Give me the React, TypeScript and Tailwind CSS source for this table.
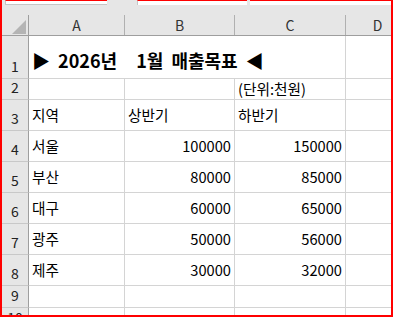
const font = "font-['Noto_Sans_CJK_KR','Noto_Sans',sans-serif]";

type Row = { n: number; h: string; a?: string; b?: string; c?: string; num?: boolean };

const rows: Row[] = [
  { n: 2, h: 'h-[21px]', c: '(단위:천원)' },
  { n: 3, h: 'h-[31px]', a: '지역', b: '상반기', c: '하반기' },
  { n: 4, h: 'h-[31px]', a: '서울', b: '100000', c: '150000', num: true },
  { n: 5, h: 'h-[31px]', a: '부산', b: '80000', c: '85000', num: true },
  { n: 6, h: 'h-[31px]', a: '대구', b: '60000', c: '65000', num: true },
  { n: 7, h: 'h-[31px]', a: '광주', b: '50000', c: '56000', num: true },
  { n: 8, h: 'h-[31px]', a: '제주', b: '30000', c: '32000', num: true },
  { n: 9, h: 'h-[22px]' },
  { n: 10, h: 'h-[22px]' },
];

function RowHead({ n }: { n: number }) {
  return (
    <div className="w-[27px] shrink-0 flex items-end justify-center pb-[5px] bg-[#e6e6e6] border-r border-r-[#9e9e9e] border-b border-b-[#c8c8c8] text-[14px] leading-none text-[#222]">
      {n}
    </div>
  );
}

export default function App() {
  return (
    <div className={`${font} w-[393px] h-[317px] overflow-hidden bg-white border-x-2 border-b-2 border-[#ff0000] flex flex-col`}>
      {/* formula bar remnant */}
      <div className="h-[5px] shrink-0 flex bg-[#e6e6e6]">
        <div className="w-[3px]" />
        <div className="w-[102px] bg-white border-t border-t-[#ff0000] border-l border-b border-[#c6c6c6]" />
        <div className="w-[30px]" />
        <div className="w-[110px] bg-white border-t border-t-[#ff0000] border-l border-l-[#c6c6c6]" />
        <div className="w-[3px]" />
        <div className="flex-1 bg-white border-t border-t-[#ff0000]" />
      </div>
      <div className="h-[10px] shrink-0 bg-[#e6e6e6]" />

      {/* column headers */}
      <div className="h-[21px] shrink-0 flex bg-[#e6e6e6] border-b border-[#9e9e9e] text-[14px] leading-none text-[#333]">
        <div className="w-[27px] shrink-0 flex items-end justify-end pr-[2px] pb-[1px] border-r border-[#9e9e9e]">
          <svg width="14" height="14" viewBox="0 0 14 14">
            <polygon points="14,0 14,14 0,14" fill="#b4b4b4" />
          </svg>
        </div>
        <div className="w-[96px] shrink-0 flex items-center justify-center border-r border-[#b0b0b0]">A</div>
        <div className="w-[110px] shrink-0 flex items-center justify-center border-r border-[#b0b0b0]">B</div>
        <div className="w-[111px] shrink-0 flex items-center justify-center border-r border-[#b0b0b0]">C</div>
        <div className="w-[64px] shrink-0 flex items-center justify-center border-r border-[#b0b0b0]">D</div>
      </div>

      {/* row 1 title */}
      <div className="h-[43px] shrink-0 flex">
        <RowHead n={1} />
        <div className="w-[317px] shrink-0 flex items-center pl-[3px] pt-[5px] border-r border-b border-[#d4d4d4] text-[18px] font-bold leading-none text-black whitespace-nowrap">
          <span>
            ▶<span className="ml-[4px]"> 2026년</span>
            <span className="ml-[19px]">1월</span>
            <span className="ml-[4px]"> 매출목표</span>
            <span className="ml-[4px]"> ◀</span>
          </span>
        </div>
        <div className="w-[64px] shrink-0 border-r border-b border-[#d4d4d4]" />
      </div>

      {rows.map((r) => (
        <div key={r.n} className={`${r.h} shrink-0 flex`}>
          <RowHead n={r.n} />
          <div className="w-[96px] shrink-0 flex items-center px-[3px] border-r border-b border-[#d4d4d4] text-[14.67px] leading-none text-black">
            {r.a}
          </div>
          <div
            className={`w-[110px] shrink-0 flex items-center px-[3px] border-r border-b border-[#d4d4d4] text-[14.67px] leading-none text-black ${r.num ? 'justify-end' : ''}`}
          >
            {r.b}
          </div>
          <div
            className={`w-[111px] shrink-0 flex items-center px-[3px] border-r border-b border-[#d4d4d4] text-[14.67px] leading-none text-black whitespace-nowrap ${r.num ? 'justify-end' : ''}`}
          >
            {r.c}
          </div>
          <div className="w-[64px] shrink-0 border-r border-b border-[#d4d4d4]" />
        </div>
      ))}
    </div>
  );
}
